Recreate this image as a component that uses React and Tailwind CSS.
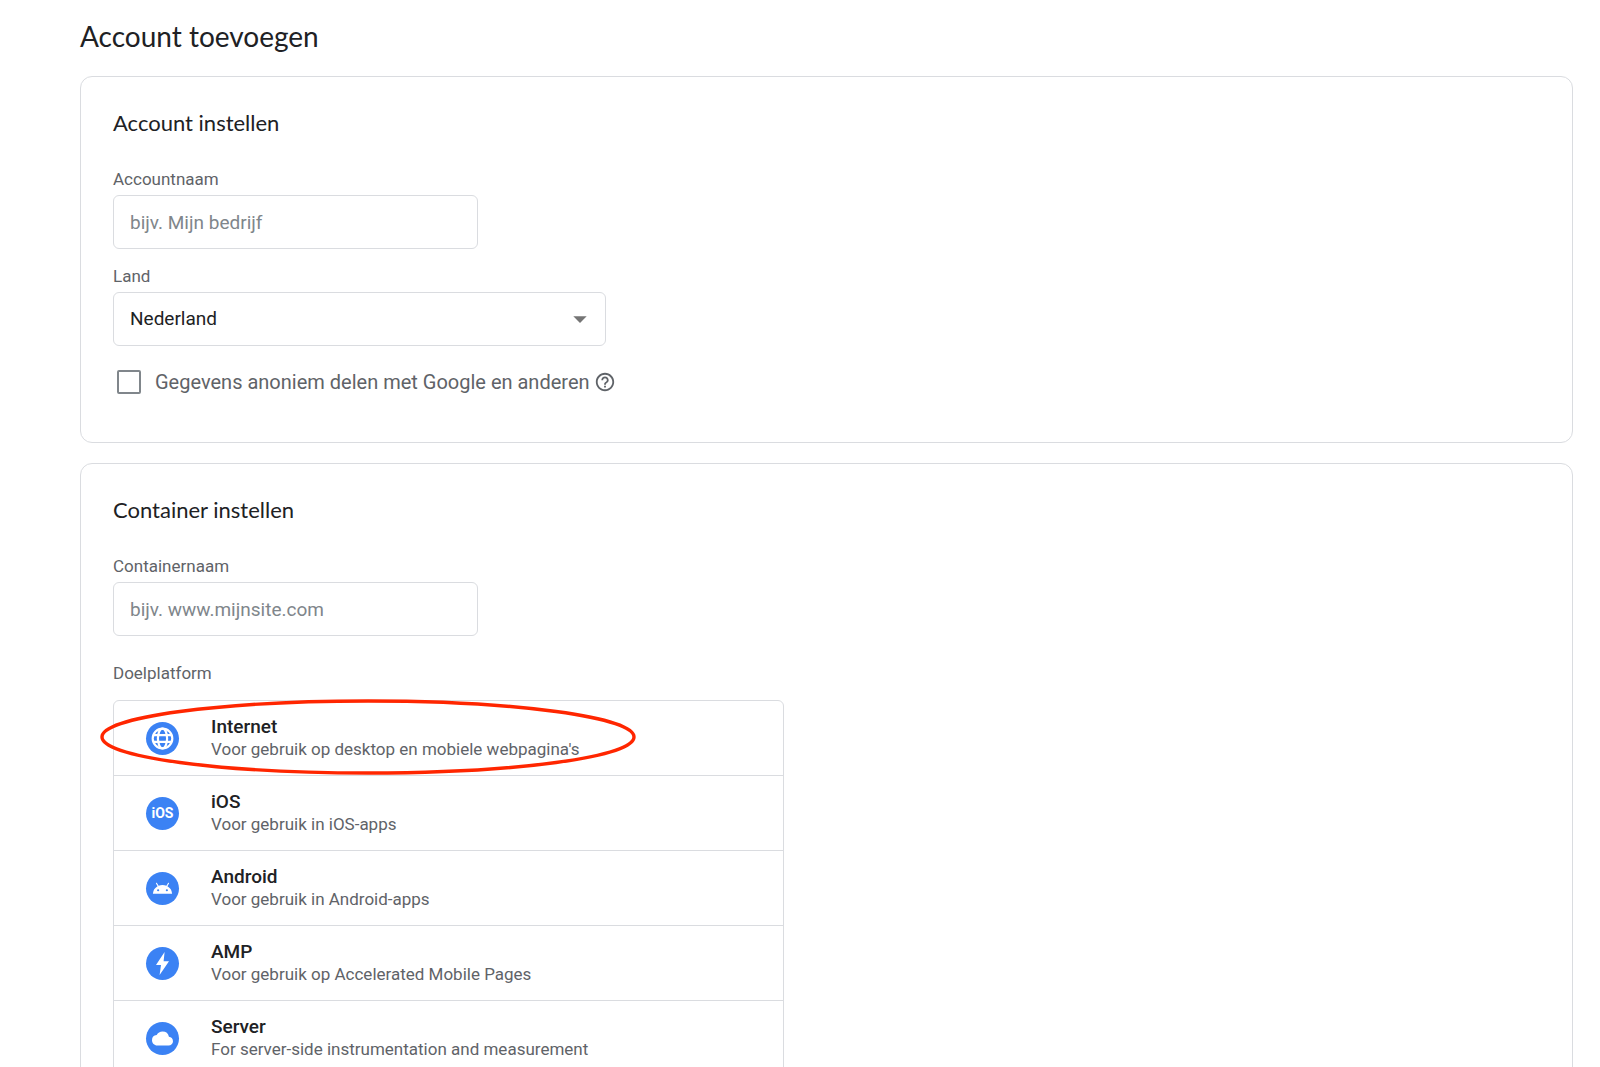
import React, { useState } from 'react';
import { MdAndroid, MdArrowDropDown, MdCloud, MdHelpOutline } from 'react-icons/md';

const GlobeIcon = () => (
  <svg viewBox="0 0 33 33" className="size-full" fill="none" stroke="currentColor" strokeWidth="2.2" aria-hidden="true">
    <circle cx="16.5" cy="16.5" r="9.8" />
    <ellipse cx="16.5" cy="16.5" rx="4.6" ry="9.8" />
    <path d="M7.5 13.2 H25.5 M7.5 19.8 H25.5" />
  </svg>
);

const BoltIcon = () => (
  <svg viewBox="0 0 33 33" className="size-full" fill="currentColor" aria-hidden="true">
    <path d="M18.6 5 L10 18 H15 L13.6 28 L23 14.2 H17.6 Z" />
  </svg>
);

const platforms = [
  {
    id: 'web',
    name: 'Internet',
    description: "Voor gebruik op desktop en mobiele webpagina's",
    icon: <GlobeIcon />,
    highlighted: true
  },
  {
    id: 'ios',
    name: 'iOS',
    description: 'Voor gebruik in iOS-apps',
    icon: <span className="text-sm leading-none font-bold">iOS</span>
  },
  {
    id: 'android',
    name: 'Android',
    description: 'Voor gebruik in Android-apps',
    icon: <MdAndroid size={21} />
  },
  {
    id: 'amp',
    name: 'AMP',
    description: 'Voor gebruik op Accelerated Mobile Pages',
    icon: <BoltIcon />
  },
  {
    id: 'server',
    name: 'Server',
    description: 'For server-side instrumentation and measurement',
    icon: <MdCloud size={21} />
  }
];

const Card = ({ title, children }) => (
  <section className="rounded-xl border border-[#dadce0] px-8 pt-8 pb-12">
    <h2 className="mb-8 font-[Lato,sans-serif] text-[22px] leading-7 text-[#202124]">{title}</h2>
    {children}
  </section>
);

const TextField = ({ id, label, placeholder, value, onChange }) => (
  <div>
    <label htmlFor={id} className="mb-1.5 block text-[17px] leading-5 text-[#5f6368]">
      {label}
    </label>
    <input
      id={id}
      type="text"
      value={value}
      onChange={(e) => onChange(e.target.value)}
      placeholder={placeholder}
      className="block h-[54px] w-full max-w-[365px] rounded-md border border-[#dadce0] px-4 text-[19px] text-[#202124] placeholder:text-[#80868b]"
    />
  </div>
);

const PlatformRow = ({ platform }) => (
  <li className="relative border-t border-[#dadce0] first:border-t-0">
    <button type="button" className="flex h-[74px] w-full items-center gap-8 px-8 text-left">
      <span className="flex size-[33px] shrink-0 items-center justify-center rounded-full bg-[#3b82f4] text-white">
        {platform.icon}
      </span>
      <span>
        <span className="block text-[19px] leading-[23px] font-medium text-[#202124]">{platform.name}</span>
        <span className="block text-[17px] leading-[23px] text-[#5f6368]">{platform.description}</span>
      </span>
    </button>
    {platform.highlighted && (
      <svg
        className="pointer-events-none absolute -top-0.5 -left-3.5 h-[76px] w-[538px]"
        viewBox="0 0 538 76"
        fill="none"
        aria-hidden="true"
      >
        <ellipse cx="268" cy="38" rx="266" ry="36" stroke="#ff2600" strokeWidth="3.4" />
      </svg>
    )}
  </li>
);

const App = () => {
  const [accountName, setAccountName] = useState('');
  const [country, setCountry] = useState('nl');
  const [shareData, setShareData] = useState(false);
  const [containerName, setContainerName] = useState('');

  return (
    <main className="min-h-screen bg-white pt-5 pr-[27px] pb-12 pl-20 font-[Roboto,sans-serif]">
      <h1 className="mb-6 font-[Lato,sans-serif] text-[28px] leading-8 text-[#202124]">Account toevoegen</h1>

      <div className="space-y-5">
        <Card title="Account instellen">
          <TextField
            id="account-name"
            label="Accountnaam"
            placeholder="bijv. Mijn bedrijf"
            value={accountName}
            onChange={setAccountName}
          />

          {/* Country */}
          <div className="mt-[17px]">
            <label htmlFor="country" className="mb-1.5 block text-[17px] leading-5 text-[#5f6368]">
              Land
            </label>
            <div className="relative max-w-[493px]">
              <select
                id="country"
                value={country}
                onChange={(e) => setCountry(e.target.value)}
                className="block h-[54px] w-full appearance-none rounded-md border border-[#dadce0] bg-white px-4 text-[19px] text-[#202124]"
              >
                <option value="nl">Nederland</option>
              </select>
              <MdArrowDropDown
                size={32}
                className="pointer-events-none absolute top-[11px] right-2.5 text-[#757575]"
              />
            </div>
          </div>

          {/* Data sharing */}
          <div className="mt-6 flex items-center pl-1">
            <input
              id="share-data"
              type="checkbox"
              checked={shareData}
              onChange={(e) => setShareData(e.target.checked)}
              className="size-6 appearance-none rounded-xs border-2 border-[#80868b] checked:bg-[#3b82f4]"
            />
            <label htmlFor="share-data" className="ml-3.5 text-xl leading-6 text-[#5f6368]">
              Gegevens anoniem delen met Google en anderen
            </label>
            <button type="button" aria-label="Help" className="ml-1 text-[#5f6368]">
              <MdHelpOutline size={22} />
            </button>
          </div>
        </Card>

        <Card title="Container instellen">
          <TextField
            id="container-name"
            label="Containernaam"
            placeholder="bijv. www.mijnsite.com"
            value={containerName}
            onChange={setContainerName}
          />

          <h3 className="mt-[27px] mb-[17px] text-[17px] leading-5 text-[#5f6368]">Doelplatform</h3>
          <ul className="max-w-[671px] rounded-md border border-[#dadce0]">
            {platforms.map((platform) => (
              <PlatformRow key={platform.id} platform={platform} />
            ))}
          </ul>
        </Card>
      </div>
    </main>
  );
};

export default App;
